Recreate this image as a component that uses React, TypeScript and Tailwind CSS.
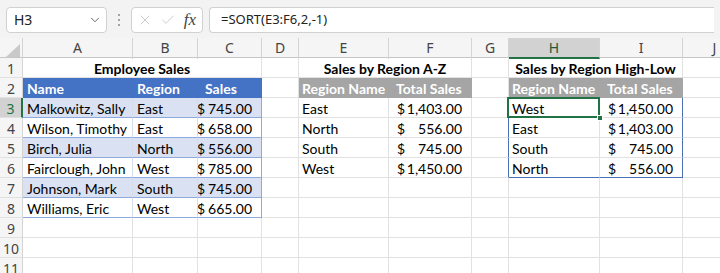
import React from 'react';
import { ChevronDown, X, Check } from 'lucide-react';

const cols = 'grid grid-cols-[23px_110px_65px_64px_37px_90px_83px_37px_91px_83px_64px]';
const base = 'h-[20px] border-r border-b text-[14px] leading-[18px] pt-[2px] whitespace-nowrap overflow-hidden text-black';
const grid = 'border-r-[#e1e1e1] border-b-[#e1e1e1]';

const employees = [
  ['Malkowitz, Sally', 'East', '745.00'],
  ['Wilson, Timothy', 'East', '658.00'],
  ['Birch, Julia', 'North', '556.00'],
  ['Fairclough, John', 'West', '785.00'],
  ['Johnson, Mark', 'South', '745.00'],
  ['Williams, Eric', 'West', '665.00'],
];
const byName = [['East', '1,403.00'], ['North', '556.00'], ['South', '745.00'], ['West', '1,450.00']];
const bySales = [['West', '1,450.00'], ['East', '1,403.00'], ['South', '745.00'], ['North', '556.00']];

function Money({ v, cls }: { v: string; cls: string }) {
  return (
    <div className={`${base} ${cls} flex justify-between pl-[8px] pr-[9px]`}>
      <span>$</span>
      <span>{v}</span>
    </div>
  );
}

function RowNum({ n }: { n: number }) {
  const sel = n === 3;
  return (
    <div
      className={`h-[20px] border-b border-b-[#e1e1e1] text-center text-[14px] leading-[18px] pt-[2px] font-['Noto_Sans',sans-serif] ${
        sel ? 'bg-[#d2d2d2] text-[#217346] border-r-2 border-r-[#217346]' : 'bg-[#f5f5f5] text-[#444] border-r border-r-[#d4d4d4]'
      }`}
    >
      {n}
    </div>
  );
}

export default function App() {
  const letters = ['A', 'B', 'C', 'D', 'E', 'F', 'G', 'H', 'I', 'J'];
  const bodyRows = [3, 4, 5, 6, 7, 8, 9, 10, 11];

  return (
    <div className="w-[720px] h-[273px] overflow-hidden bg-white font-[Lato,sans-serif]">
      {/* formula bar */}
      <div className="h-[38px] bg-[#f3f3f3] flex items-center gap-[6px] px-[6px] pt-[1px]">
        <div className="w-[101px] h-[26px] bg-white border border-[#d1d1d1] rounded-[4px] flex items-center justify-between pl-[7px] pr-[4px] text-[14px] text-[#222] font-['Noto_Sans',sans-serif]">
          <span>H3</span>
          <ChevronDown className="w-[14px] h-[14px] text-[#555]" strokeWidth={1.5} />
        </div>
        <svg width="12" height="20" viewBox="0 0 12 20" className="shrink-0">
          <circle cx="6" cy="5" r="1" fill="#888" />
          <circle cx="6" cy="10" r="1" fill="#888" />
          <circle cx="6" cy="15" r="1" fill="#888" />
        </svg>
        <div className="w-[72px] h-[26px] bg-white border border-[#d1d1d1] rounded-[4px] flex items-center justify-between px-[5px]">
          <X className="w-[16px] h-[16px] text-[#c4c4c4]" strokeWidth={1.3} />
          <Check className="w-[16px] h-[16px] text-[#c4c4c4]" strokeWidth={1.3} />
          <span className="italic text-[17px] text-[#444] font-['Liberation_Serif',serif] leading-none pr-[1px]">fx</span>
        </div>
        <div className="flex-1 h-[26px] bg-white border border-[#d1d1d1] rounded-l-[4px] border-r-0 flex items-center pl-[11px] text-[13px] text-[#222] font-['Noto_Sans',sans-serif]">
          =SORT(E3:F6,2,-1)
        </div>
      </div>

      {/* column headers */}
      <div className={`${cols} h-[20px] bg-[#f5f5f5] border-b border-[#c6c6c6] text-[14px] text-[#444] font-['Noto_Sans',sans-serif]`}>
        <div className="border-r border-[#d4d4d4] flex items-end justify-end pr-[2px] pb-[2px]">
          <svg width="14" height="13" viewBox="0 0 14 13">
            <polygon points="14,0 14,13 0,13" fill="#c9c9c9" />
          </svg>
        </div>
        {letters.map((l) =>
          l === 'H' ? (
            <div key={l} className="bg-[#d2d2d2] text-[#1e5a37] border-r border-[#d4d4d4] border-b-2 border-b-[#217346] text-center leading-[19px]">
              {l}
            </div>
          ) : (
            <div key={l} className="border-r border-[#d4d4d4] text-center leading-[20px]">
              {l}
            </div>
          )
        )}
      </div>

      {/* sheet body */}
      <div className={cols}>
        {/* row 1 */}
        <RowNum n={1} />
        <div className={`${base} ${grid} col-span-3 text-center font-bold`}>Employee Sales</div>
        <div className={`${base} ${grid}`} />
        <div className={`${base} ${grid} col-span-2 text-center font-bold`}>Sales by Region A-Z</div>
        <div className={`${base} ${grid}`} />
        <div className={`${base} ${grid} col-span-2 text-center font-bold`}>Sales by Region High-Low</div>
        <div className={`${base} ${grid}`} />

        {/* row 2 */}
        <RowNum n={2} />
        <div className={`${base} bg-[#4472c4] border-r-[#4472c4] border-b-[#4472c4] text-white font-bold pl-[4px]`}>Name</div>
        <div className={`${base} bg-[#4472c4] border-r-[#4472c4] border-b-[#4472c4] text-white font-bold pl-[4px]`}>Region</div>
        <div className={`${base} bg-[#4472c4] border-r-[#4472c4] border-b-[#4472c4] text-white font-bold pl-[7px]`}>Sales</div>
        <div className={`${base} ${grid}`} />
        <div className={`${base} bg-[#a5a5a5] border-r-[#a5a5a5] border-b-[#a5a5a5] text-white font-bold pl-[3px]`}>Region Name</div>
        <div className={`${base} bg-[#a5a5a5] border-r-[#a5a5a5] border-b-[#a5a5a5] text-white font-bold pl-[7px]`}>Total Sales</div>
        <div className={`${base} ${grid}`} />
        <div className={`${base} bg-[#a5a5a5] border-r-[#a5a5a5] border-b-[#a5a5a5] text-white font-bold pl-[3px]`}>Region Name</div>
        <div className={`${base} bg-[#a5a5a5] border-r-[#a5a5a5] border-b-[#a5a5a5] text-white font-bold pl-[7px]`}>Total Sales</div>
        <div className={`${base} ${grid}`} />

        {bodyRows.map((n, i) => {
          const emp = employees[i];
          const band = i % 2 === 0;
          const tBg = emp ? (band ? 'bg-[#d9e1f2]' : 'bg-white') : '';
          const tInner = emp ? 'border-r-[#d6dce8] border-b-[#8ea9db]' : grid;
          const tLast = emp ? 'border-r-[#8ea9db] border-b-[#8ea9db]' : grid;
          const az = byName[i];
          const hl = bySales[i];
          const hlBottom = i === 3 ? 'border-b-[#4a6fb5]' : 'border-b-[#e1e1e1]';
          return (
            <React.Fragment key={n}>
              <RowNum n={n} />
              <div className={`${base} ${tBg} ${tInner} pl-[4px]`}>{emp?.[0]}</div>
              <div className={`${base} ${tBg} ${tInner} pl-[4px]`}>{emp?.[1]}</div>
              {emp ? (
                <div className={`${base} ${tBg} ${tLast} flex justify-end gap-[3px] pr-[9px]`}>
                  <span>$</span>
                  <span>{emp[2]}</span>
                </div>
              ) : (
                <div className={`${base} ${grid}`} />
              )}
              <div className={`${base} ${grid}`} />
              <div className={`${base} ${grid} pl-[3px]`}>{az?.[0]}</div>
              {az ? <Money v={az[1]} cls={grid} /> : <div className={`${base} ${grid}`} />}
              <div className={`${base} border-b-[#e1e1e1] ${hl ? 'border-r-[#4a6fb5]' : 'border-r-[#e1e1e1]'}`} />
              {i === 0 ? (
                <div className={`${base} border-r-[#e1e1e1] ${hlBottom} pl-[3px] relative overflow-visible z-10`}>
                  {hl[0]}
                  <div className="absolute -left-[2px] -top-[1px] -right-[1px] -bottom-[1px] border-2 border-[#217346]" />
                  <div className="absolute -right-[4px] -bottom-[4px] w-[6px] h-[6px] bg-[#217346] border border-white" />
                </div>
              ) : (
                <div className={`${base} border-r-[#e1e1e1] ${hlBottom} pl-[3px]`}>{hl?.[0]}</div>
              )}
              {hl ? (
                <Money v={hl[1]} cls={`border-r-[#4a6fb5] ${hlBottom}`} />
              ) : (
                <div className={`${base} ${grid}`} />
              )}
              <div className={`${base} ${grid}`} />
            </React.Fragment>
          );
        })}
      </div>
    </div>
  );
}
